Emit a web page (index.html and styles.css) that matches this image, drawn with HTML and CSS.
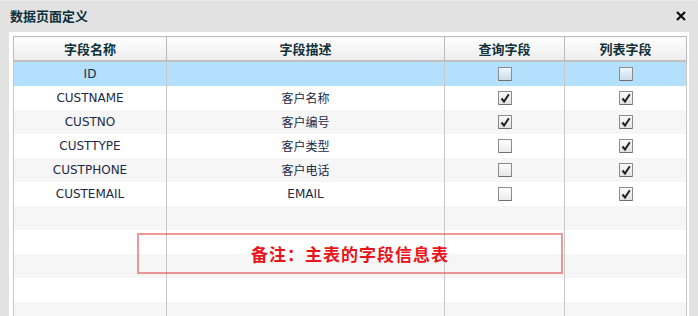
FILE: index.html
```html
<!DOCTYPE html>
<html lang="zh-CN">
  <head>
    <meta charset="UTF-8" />
    <title>数据页面定义</title>
    <link rel="stylesheet" href="styles.css">
  </head>
  <body>
    <div class="dialog">
      <div class="dialog-title">
        <span>数据页面定义</span>
        <svg class="close" width="10" height="10" viewBox="0 0 10 10">
          <path d="M1 1 L9 9 M9 1 L1 9" stroke="#111" stroke-width="2.2" />
        </svg>
      </div>
      <div class="panel">
        <table class="grid">
          <colgroup>
            <col style="width: 153px" />
            <col style="width: 278px" />
            <col style="width: 120px" />
            <col style="width: 122px" />
          </colgroup>
          <thead>
            <tr>
              <th>字段名称</th>
              <th>字段描述</th>
              <th>查询字段</th>
              <th>列表字段</th>
            </tr>
          </thead>
          <tbody>
            <tr class="selected">
              <td>ID</td>
              <td></td>
              <td><span class="cb"></span></td>
              <td><span class="cb"></span></td>
            </tr>
            <tr>
              <td>CUSTNAME</td>
              <td>客户名称</td>
              <td><span class="cb on"></span></td>
              <td><span class="cb on"></span></td>
            </tr>
            <tr>
              <td>CUSTNO</td>
              <td>客户编号</td>
              <td><span class="cb on"></span></td>
              <td><span class="cb on"></span></td>
            </tr>
            <tr>
              <td>CUSTTYPE</td>
              <td>客户类型</td>
              <td><span class="cb"></span></td>
              <td><span class="cb on"></span></td>
            </tr>
            <tr>
              <td>CUSTPHONE</td>
              <td>客户电话</td>
              <td><span class="cb"></span></td>
              <td><span class="cb on"></span></td>
            </tr>
            <tr>
              <td>CUSTEMAIL</td>
              <td>EMAIL</td>
              <td><span class="cb"></span></td>
              <td><span class="cb on"></span></td>
            </tr>
            <tr><td></td><td></td><td></td><td></td></tr>
            <tr><td></td><td></td><td></td><td></td></tr>
            <tr><td></td><td></td><td></td><td></td></tr>
            <tr><td></td><td></td><td></td><td></td></tr>
            <tr><td></td><td></td><td></td><td></td></tr>
            <tr><td></td><td></td><td></td><td></td></tr>
          </tbody>
        </table>
        <div class="note">备注：主表的字段信息表</div>
      </div>
    </div>
  </body>
</html>
```

FILE: styles.css
```css
html,
body {
  margin: 0;
  padding: 0;
  overflow: hidden;
}
body {
  font-family: "DejaVu Sans", "Noto Sans CJK SC", sans-serif;
  font-size: 12px;
  color: #1c2a48;
  background: #e2e2e2;
}
.dialog {
  width: 698px;
  height: 316px;
  background: #e2e2e2;
  border-top: 1px solid #ececec;
  border-top-right-radius: 4px;
  box-sizing: border-box;
}
.dialog-title {
  height: 31px;
  display: flex;
  align-items: center;
  justify-content: space-between;
  padding: 0 12px 0 10px;
  font-family: "Noto Sans CJK SC", sans-serif;
  font-weight: bold;
  font-size: 13px;
  color: #10303a;
}
.dialog-title span {
  margin-top: -2px;
}
.close {
  margin-top: -2px;
}
.panel {
  position: relative;
  margin: 0 9px;
  padding: 4px 4px 0;
  height: 284px;
  background: #fff;
  overflow: hidden;
}
.grid {
  table-layout: fixed;
  width: 673px;
  border-collapse: collapse;
  border-left: 1px solid #bbb;
  border-right: 1px solid #bbb;
}
.grid th {
  height: 23px;
  padding: 0;
  font-family: "Noto Sans CJK SC", sans-serif;
  font-size: 13px;
  font-weight: bold;
  color: #10303a;
  background: linear-gradient(#ffffff, #ececec);
  border: 1px solid #bbb;
  border-bottom: 2px solid #c0c0c0;
  text-align: center;
}
.grid td {
  height: 23px;
  padding: 0 0 1px;
  text-align: center;
  vertical-align: middle;
  border-left: 1px solid #c8c8c8;
  border-right: 1px solid #c8c8c8;
}
.grid tbody tr:nth-child(odd) {
  background: #f6f6f6;
}
.grid tbody tr:nth-child(even) {
  background: #fff;
}
.grid tbody tr.selected {
  background: #b2e0fd;
}
.cb {
  display: inline-block;
  width: 12px;
  height: 12px;
  margin-top: 1px;
  border: 1px solid #8c8c8c;
  border-bottom-color: #6e6e6e;
  border-radius: 1px;
  background: linear-gradient(rgba(255, 255, 255, 0.75), rgba(220, 220, 220, 0.6));
  vertical-align: middle;
}
.cb.on {
  background-image: url("data:image/svg+xml,%3Csvg xmlns='http://www.w3.org/2000/svg' width='12' height='12'%3E%3Cpath d='M2.5 6.5 L5 9.5 L9.8 2.3' fill='none' stroke='%23222' stroke-width='2'/%3E%3C/svg%3E"),
    linear-gradient(#fafafa, #e2e2e2);
}
.note {
  position: absolute;
  left: 128px;
  top: 201px;
  width: 422px;
  height: 37px;
  border: 2px solid rgba(222, 70, 70, 0.55);
  display: flex;
  align-items: center;
  justify-content: center;
  font-family: "Noto Sans CJK SC", serif;
  font-size: 17px;
  font-weight: bold;
  color: #e8141a;
  letter-spacing: 1px;
}
```
